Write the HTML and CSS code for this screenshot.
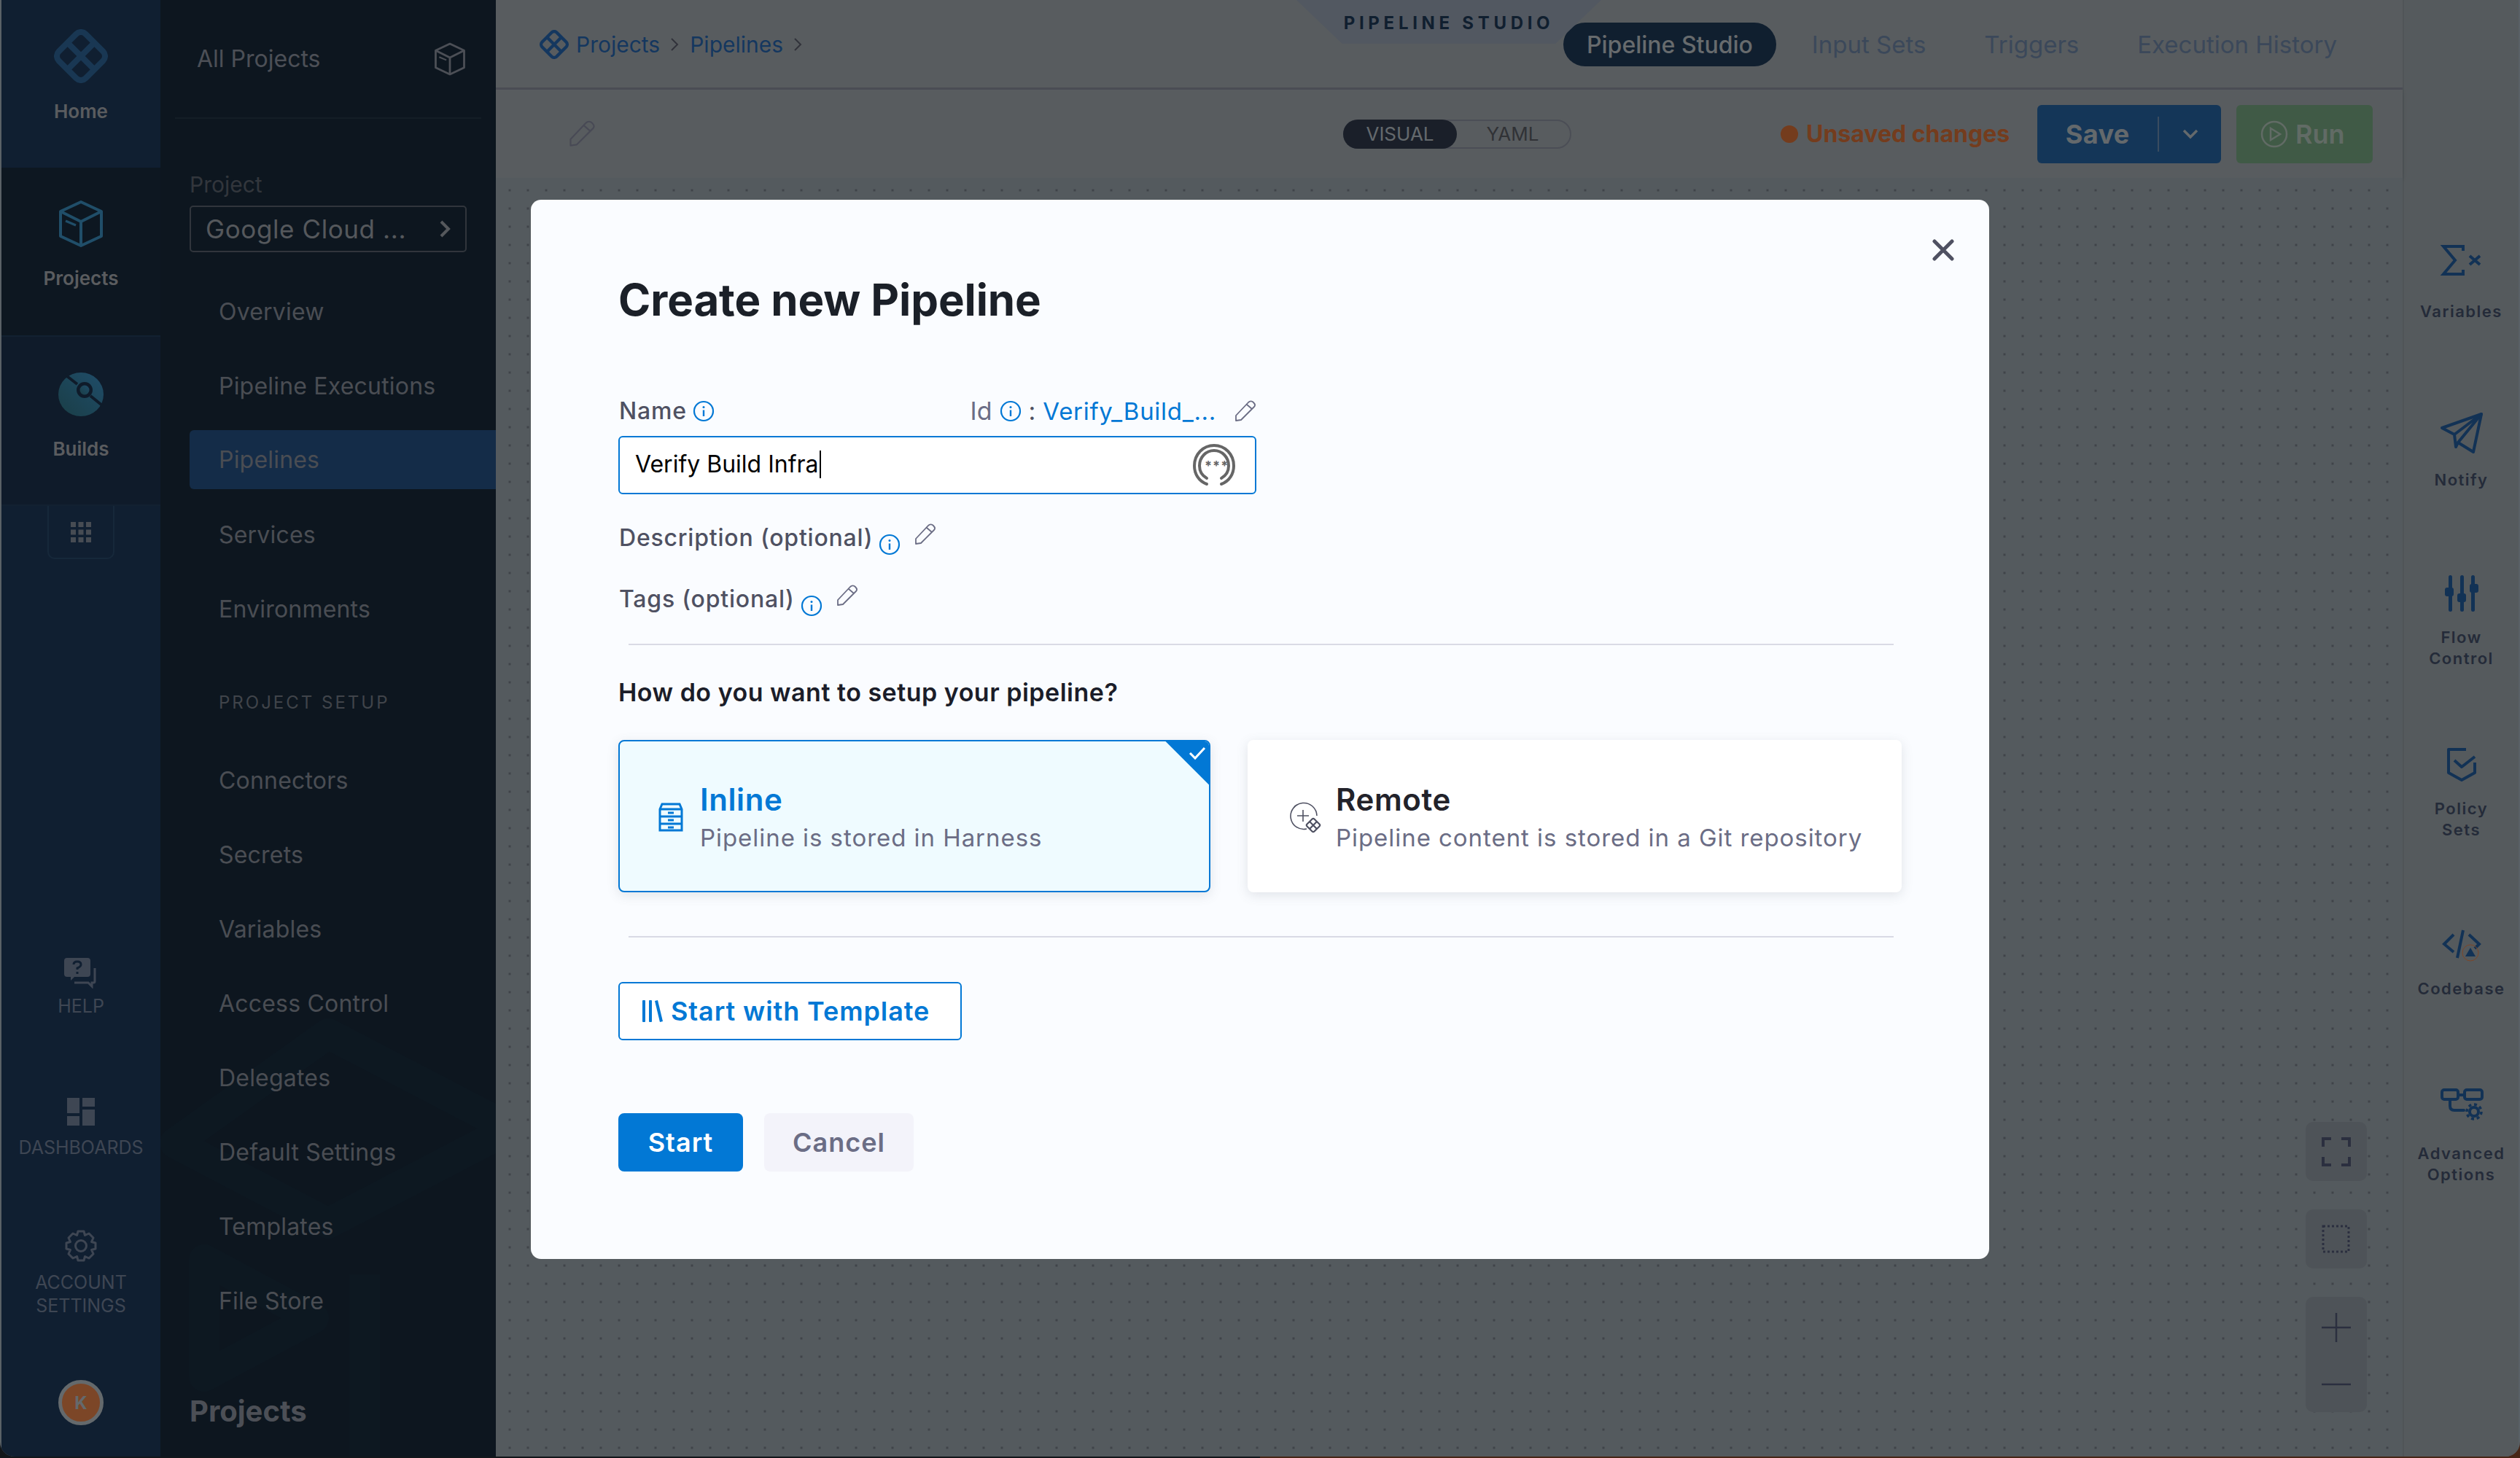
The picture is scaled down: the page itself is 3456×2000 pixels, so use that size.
FILE: index.html
```html
<!DOCTYPE html>
<html lang="en">
<head>
<meta charset="utf-8">
<title>Create new Pipeline</title>
<link rel="stylesheet" href="styles.css">
</head>
<body>
<svg class="defs" width="0" height="0">
  <defs>
    <symbol id="logo" viewBox="0 0 74 74"><g transform="rotate(45 37 37)" fill="none" stroke="currentColor" stroke-width="8" stroke-linejoin="round"><rect x="11" y="11" width="52" height="52" rx="9"/><path d="M37 11V63M11 37H63"/></g></symbol>
    <symbol id="info" viewBox="0 0 30 30"><circle cx="15" cy="15" r="13" fill="none" stroke="#0278d5" stroke-width="2.2"/><path d="M15 13.5V22" stroke="#0278d5" stroke-width="2.4"/><circle cx="15" cy="9.5" r="1.5" fill="#0278d5"/></symbol>
    <symbol id="pencil" viewBox="0 0 30 30"><path d="M2 28V21L19 3C21 1 24 1 26 3S29 7 27 9L9 27Z M17 6L24 12" fill="none" stroke="currentColor" stroke-width="1.8" stroke-linejoin="round"/></symbol>
  </defs>
</svg>
<div class="window">
  <aside class="rail">
    <a class="rail-item rail-home">
      <svg class="ri-logo"><use href="#logo"/></svg>
      <span>Home</span>
    </a>
    <a class="rail-item rail-active">
      <svg class="ri-cube" viewBox="0 0 60 66" fill="none" stroke="currentColor" stroke-width="4" stroke-linejoin="round"><path d="M30 3L58 16V50L30 63L2 50V16Z"/><path d="M2 16L30 30L58 16M30 30V63"/><path d="M9 29L23 35" stroke-width="3"/></svg>
      <span>Projects</span>
    </a>
    <a class="rail-item rail-builds">
      <svg class="ri-builds" viewBox="0 0 62 62"><defs><linearGradient id="bg1" x1="0" y1="1" x2="1" y2="0"><stop offset="0" stop-color="#26707e"/><stop offset="1" stop-color="#338fca"/></linearGradient></defs><ellipse cx="31" cy="31" rx="31" ry="30" fill="url(#bg1)"/><circle cx="36" cy="25" r="11" fill="#0e233e"/><circle cx="36" cy="25" r="6.5" fill="url(#bg1)"/><path d="M8 3L26 17M44 33L60 46" stroke="#0e233e" stroke-width="4"/></svg>
      <span>Builds</span>
    </a>
    <div class="rail-grid">
      <svg width="28" height="28" viewBox="0 0 28 28" fill="#8b8f99"><rect width="7" height="7"/><rect x="10.500" width="7" height="7"/><rect x="21" width="7" height="7"/><rect y="10.500" width="7" height="7"/><rect x="10.500" y="10.500" width="7" height="7"/><rect x="21" y="10.500" width="7" height="7"/><rect y="21" width="7" height="7"/><rect x="10.500" y="21" width="7" height="7"/><rect x="21" y="21" width="7" height="7"/></svg>
    </div>
    <div class="rail-lower">
      <a class="rail-small rs-help">
        <svg width="46" height="42" viewBox="0 0 46 42"><path d="M4 0H32Q36 0 36 4V22Q36 26 32 26H14L9 31V26H4Q0 26 0 22V4Q0 0 4 0Z" fill="currentColor"/><path d="M13 9Q13 5 18 5T23 9Q23 12 18 14V16M18 19V22" fill="none" stroke="#102c4f" stroke-width="3"/><path d="M42 14V32Q42 34 40 34H38V39L33 34H14" fill="none" stroke="currentColor" stroke-width="3"/></svg>
        <span>HELP</span>
      </a>
      <a class="rail-small rs-dash">
        <svg width="38" height="38" viewBox="0 0 38 38" fill="currentColor"><rect width="17" height="21"/><rect x="21" width="17" height="12"/><rect y="25" width="17" height="13"/><rect x="21" y="16" width="17" height="22"/></svg>
        <span>DASHBOARDS</span>
      </a>
      <a class="rail-small rs-acct">
        <svg width="44" height="44" viewBox="0 0 44 44" fill="none" stroke="currentColor" stroke-width="3" stroke-linejoin="round"><circle cx="22" cy="22" r="7.500"/><path d="M18 2H26L27.500 7.500L33 5L39 11L36.500 16.500L42 18V26L36.500 27.500L39 33L33 39L27.500 36.500L26 42H18L16.500 36.500L11 39L5 33L7.500 27.500L2 26V18L7.500 16.500L5 11L11 5L16.500 7.500Z"/></svg>
        <span>ACCOUNT<br>SETTINGS</span>
      </a>
      <div class="avatar">K</div>
    </div>
  </aside>

  <nav class="nav">
    <svg class="nav-mark" width="460" height="620" viewBox="0 0 460 620" fill="none" stroke="#0b1b2b" stroke-width="42" stroke-linejoin="round"><path d="M230 40L480 170L230 300L20 190Z"/><path d="M60 350L210 430L60 510Z"/><path d="M280 370V620"/></svg>
    <div class="nav-head">
      <span>All Projects</span>
      <svg width="46" height="46" viewBox="0 0 60 66" fill="none" stroke="#94959f" stroke-width="4" stroke-linejoin="round"><path d="M30 3L58 16V50L30 63L2 50V16Z"/><path d="M2 16L30 30L58 16M30 30V63"/><path d="M9 29L23 35" stroke-width="3"/></svg>
    </div>
    <div class="nav-project">
      <div class="np-label">Project</div>
      <div class="np-select"><span>Google Cloud ...</span>
        <svg width="16" height="24" viewBox="0 0 16 24" fill="none" stroke="#a9a9ad" stroke-width="4"><path d="M3 2L13 12L3 22"/></svg>
      </div>
    </div>
    <ul class="nav-list">
      <li>Overview</li>
      <li>Pipeline Executions</li>
      <li class="nav-current">Pipelines</li>
      <li>Services</li>
      <li>Environments</li>
    </ul>
    <div class="nav-section">PROJECT SETUP</div>
    <ul class="nav-list">
      <li>Connectors</li>
      <li>Secrets</li>
      <li>Variables</li>
      <li>Access Control</li>
      <li>Delegates</li>
      <li>Default Settings</li>
      <li>Templates</li>
      <li>File Store</li>
    </ul>
    <div class="nav-title">Projects</div>
  </nav>

  <main class="main">
    <div class="work">
      <header class="topbar">
        <div class="crumbs">
          <svg class="crumb-logo"><use href="#logo"/></svg>
          <a>Projects</a>
          <svg class="crumb-sep" width="12" height="20" viewBox="0 0 12 20" fill="none" stroke="currentColor" stroke-width="2"><path d="M2 2L10 10L2 18"/></svg>
          <a>Pipelines</a>
          <svg class="crumb-sep" width="12" height="20" viewBox="0 0 12 20" fill="none" stroke="currentColor" stroke-width="2"><path d="M2 2L10 10L2 18"/></svg>
        </div>
        <div class="studio-tag">PIPELINE STUDIO</div>
        <div class="tabs">
          <a class="tab tab-on">Pipeline Studio</a>
          <a class="tab">Input Sets</a>
          <a class="tab">Triggers</a>
          <a class="tab">Execution History</a>
        </div>
      </header>
      <div class="toolbar">
        <svg class="tb-pencil"><use href="#pencil"/></svg>
        <div class="toggle"><span class="toggle-on">VISUAL</span><span class="toggle-off">YAML</span></div>
        <div class="unsaved"><i></i>Unsaved changes</div>
        <div class="save"><span class="save-label">Save</span><span class="save-caret"><svg width="22" height="14" viewBox="0 0 22 14" fill="none" stroke="currentColor" stroke-width="3.500"><path d="M2 2L11 11L20 2"/></svg></span></div>
        <div class="run"><svg width="38" height="38" viewBox="0 0 38 38" fill="none" stroke="currentColor" stroke-width="2.500"><circle cx="19" cy="19" r="17"/><path d="M14 11L27 19L14 27Z"/></svg><span>Run</span></div>
      </div>
      <div class="canvas">
        <div class="zoom-tools">
          <div class="zt"><svg width="40" height="40" viewBox="0 0 40 40" fill="none" stroke="#4d4f6e" stroke-width="4"><path d="M2 13V2H13M27 2H38V13M2 27V38H13M27 38H38V27"/></svg></div>
          <div class="zt"><svg width="40" height="40" viewBox="0 0 40 40" fill="none" stroke="#4d4f6e" stroke-width="3" stroke-dasharray="3 3"><rect x="2" y="2" width="35" height="35"/></svg></div>
          <div class="zt zt-tall">
            <svg width="40" height="40" viewBox="0 0 40 40" fill="none" stroke="#4d4f6e" stroke-width="2.500"><path d="M20 0V40M0 20H40"/></svg>
            <svg width="40" height="4" viewBox="0 0 40 4" fill="none" stroke="#4d4f6e" stroke-width="2.500"><path d="M0 2H40"/></svg>
          </div>
        </div>
      </div>
    </div>
    <aside class="rrail">
      <a class="rr r1"><svg width="54" height="42" viewBox="0 0 54 42" fill="none" stroke="currentColor" stroke-width="4"><path d="M29 8V2H2L18 21L2 40H29V34"/><path d="M38 15L52 27M52 15L38 27"/></svg><span>Variables</span></a>
      <a class="rr r2"><svg width="58" height="56" viewBox="0 0 58 56" fill="none" stroke="currentColor" stroke-width="4" stroke-linejoin="round"><path d="M2 21L56 2L45 54L24 41L21 47L19 30Z"/><path d="M19 30L56 2L24 41"/></svg><span>Notify</span></a>
      <a class="rr r3"><svg width="46" height="50" viewBox="0 0 46 50" fill="currentColor"><rect x="5" width="5" height="50" rx="2.500"/><rect x="21" width="5" height="50" rx="2.500"/><rect x="36" width="5" height="50" rx="2.500"/><rect y="17" width="12" height="12" rx="3"/><rect x="17" y="25" width="12" height="12" rx="3"/><rect x="34" y="12" width="12" height="12" rx="3"/></svg><span>Flow<br>Control</span></a>
      <a class="rr r4"><svg width="40" height="46" viewBox="0 0 40 46" fill="none" stroke="currentColor" stroke-width="4" stroke-linejoin="round"><path d="M26 2H2V34L20 44L38 34V20"/><path d="M10 17L20 26L38 12"/></svg><span>Policy<br>Sets</span></a>
      <a class="rr r5"><svg width="52" height="44" viewBox="0 0 52 44"><path d="M15 8L2 21L15 32M36 8L50 21L44 27M28 2L20 40" fill="none" stroke="currentColor" stroke-width="4"/><circle cx="38" cy="33" r="11" fill="none" stroke="#ff8039" stroke-width="1"/><path d="M38 26L45 38H31Z" fill="currentColor"/></svg><span>Codebase</span></a>
      <a class="rr r6"><svg width="58" height="46" viewBox="0 0 58 46"><g fill="none" stroke="currentColor" stroke-width="4"><rect x="2" y="2" width="22" height="13" rx="3"/><rect x="33" y="2" width="24" height="13" rx="3"/><path d="M24 9H33M13 15V24Q13 30 19 30H32" stroke-linecap="round"/></g><circle cx="46" cy="32" r="6" fill="none" stroke="currentColor" stroke-width="4"/><circle cx="46" cy="32" r="10" fill="none" stroke="currentColor" stroke-width="3.500" stroke-dasharray="4 3.800"/></svg><span>Advanced<br>Options</span></a>
    </aside>
  </main>

  <div class="overlay">
    <section class="modal">
      <button class="modal-close" aria-label="Close"><svg width="30" height="30" viewBox="0 0 30 30" fill="none" stroke="#4f5162" stroke-width="5" stroke-linecap="round"><path d="M3 3L27 27M27 3L3 27"/></svg></button>
      <h1>Create new Pipeline</h1>
      <div class="field-head">
        <div class="lbl">Name <svg class="ico-info"><use href="#info"/></svg></div>
        <div class="idline">
          <span class="id-k">Id</span><svg class="ico-info"><use href="#info"/></svg><span class="id-c">:</span><a class="id-v">Verify_Build_...</a>
          <svg class="ico-pen"><use href="#pencil"/></svg>
        </div>
      </div>
      <div class="input">
        <span class="input-text">Verify Build Infra</span>
        <svg class="ico-finger" viewBox="0 0 58 58" fill="none" stroke="#666" stroke-width="4" stroke-linecap="round"><path d="M19 55C8 51 2 41 2 30C2 14 14 2 29 2S56 14 56 30C56 41 50 51 39 55"/><path d="M19 47C12 43 9 37 9 30C9 18 18 9 29 9S49 18 49 30C49 37 46 43 39 47"/><text x="16" y="36" class="finger-s">***</text></svg>
      </div>
      <div class="opt opt-desc"><span class="lbl">Description (optional)</span><svg class="ico-info dn"><use href="#info"/></svg><svg class="ico-pen up"><use href="#pencil"/></svg></div>
      <div class="opt opt-tags"><span class="lbl">Tags (optional)</span><svg class="ico-info dn"><use href="#info"/></svg><svg class="ico-pen up"><use href="#pencil"/></svg></div>
      <hr class="rule rule-a">
      <h2>How do you want to setup your pipeline?</h2>
      <div class="cards">
        <div class="card card-on">
          <svg class="card-ico" width="34" height="40" viewBox="0 0 34 40" fill="none" stroke="#0278d5" stroke-width="3"><path d="M5 2H29L32 9V38H2V9Z"/><path d="M2 9H32M2 19H32M2 29H32M13 14H21M13 24H21M13 34H21"/></svg>
          <div class="card-text"><div class="card-t">Inline</div><div class="card-d">Pipeline is stored in Harness</div></div>
          <div class="card-flag"><svg width="24" height="20" viewBox="0 0 24 20" fill="none" stroke="#fff" stroke-width="3"><path d="M2 10L9 17L22 3"/></svg></div>
        </div>
        <div class="card">
          <svg class="card-ico" width="44" height="44" viewBox="0 0 44 44" fill="none" stroke="#4f5162" stroke-width="1.600"><path d="M24 38A18 18 0 1 1 38 20"/><path d="M19 12V28M11 20H27"/><g transform="rotate(45 33 33)" stroke-width="2.200"><rect x="26" y="26" width="14" height="14" rx="2"/><path d="M33 26V40M26 33H40"/></g></svg>
          <div class="card-text"><div class="card-t">Remote</div><div class="card-d">Pipeline content is stored in a Git repository</div></div>
        </div>
      </div>
      <hr class="rule rule-b">
      <button class="btn-tpl"><svg width="28" height="30" viewBox="0 0 28 30" fill="#0278d5"><rect width="4" height="30" rx="1"/><rect x="9" width="4" height="30" rx="1"/><path d="M17 1L21 0L28 29L24 30Z"/></svg>Start with Template</button>
      <div class="actions">
        <button class="btn-start">Start</button>
        <button class="btn-cancel">Cancel</button>
      </div>
    </section>
  </div>
</div>
</body>
</html>
```

FILE: styles.css
```css
* { box-sizing: border-box; }
html, body { margin: 0; height: 100%; }
body {
  width: 3456px;
  height: 2000px;
  overflow: hidden;
  background: linear-gradient(to right, #14181c 0 50%, #8a3a14 50% 100%);
  font-family: Inter, "Noto Sans", sans-serif;
  color: #1b1d29;
}
a { text-decoration: none; color: inherit; }
ul { list-style: none; margin: 0; padding: 0; }
button { font-family: inherit; cursor: pointer; }
.defs { position: absolute; }

.window {
  position: relative;
  display: flex;
  width: 3456px;
  height: 1998px;
  padding: 0 2px;
  background: #b4bcc4;
  border-radius: 0 0 20px 20px;
  overflow: hidden;
}

/* ---------- left rail ---------- */
.rail {
  width: 218px;
  flex: none;
  display: flex;
  flex-direction: column;
  background: #102c4f;
}
.rail-item {
  height: 232px;
  flex: none;
  display: flex;
  flex-direction: column;
  align-items: center;
  font-size: 26px;
  font-weight: 600;
  line-height: 32px;
  color: #b4b1b3;
}
.rail-home { height: 230px; padding-top: 40px; }
.rail-home span { margin-top: 23px; }
.ri-logo { width: 74px; height: 74px; color: #24609a; }
.rail-active { background: #091a2a; padding-top: 44px; border-bottom: 2px solid #14304e; }
.rail-active span { margin-top: 26px; }
.ri-cube { width: 60px; height: 66px; color: #3392c9; }
.rail-builds { background: #0e233e; padding-top: 48px; border-bottom: 2px solid #14304e; }
.rail-builds span { margin-top: 28px; }
.ri-builds { width: 62px; height: 62px; }
.rail-grid {
  width: 92px;
  height: 73px;
  margin: 0 auto;
  display: flex;
  align-items: center;
  justify-content: center;
  border: 2px solid #1e3e62;
  border-top: 0;
  border-radius: 0 0 10px 10px;
}
.rail-lower {
  margin-top: auto;
  display: flex;
  flex-direction: column;
  align-items: center;
  padding-bottom: 43px;
}
.rail-small {
  display: flex;
  flex-direction: column;
  align-items: center;
  font-size: 25px;
  line-height: 32px;
  color: #77809a;
  text-align: center;
}
.rail-small span { display: block; margin-top: 8px; }
.rs-dash { margin-top: 110px; }
.rs-dash span { margin-top: 14px; }
.rs-acct { margin-top: 97px; }
.rs-acct span { margin-top: 12px; }
.avatar {
  width: 62px;
  height: 62px;
  margin-top: 86px;
  display: flex;
  align-items: center;
  justify-content: center;
  border: 5px solid #cbced0;
  border-radius: 50%;
  background: #ff8039;
  color: #cbced0;
  font-size: 24px;
  font-weight: 700;
}

/* ---------- nav ---------- */
.nav {
  position: relative;
  width: 460px;
  flex: none;
  background: #091827;
  overflow: hidden;
}
.nav-mark { position: absolute; left: 0; bottom: 0; }
.nav > div, .nav > ul { position: relative; }
.nav-head {
  height: 163px;
  margin: 0 20px;
  padding: 0 20px 0 30px;
  display: flex;
  align-items: center;
  justify-content: space-between;
  border-bottom: 2px solid #1a2937;
  font-size: 32px;
  color: #94959f;
}
.nav-project { padding: 72px 40px 0; }
.np-label { font-size: 30px; line-height: 36px; color: #5b5d66; }
.np-select {
  height: 64px;
  margin-top: 11px;
  padding: 0 20px 0 20px;
  display: flex;
  align-items: center;
  justify-content: space-between;
  border: 2px solid #5a5c66;
  border-radius: 5px;
  font-size: 35px;
  letter-spacing: .6px;
  color: #a9a9ad;
}
.nav-list { padding-left: 40px; }
.nav-project + .nav-list { margin-top: 30px; }
.nav-list li {
  height: 102px;
  padding-left: 40px;
  display: flex;
  align-items: center;
  font-size: 32px;
  letter-spacing: .2px;
  color: #90919a;
}
.nav-list li.nav-current {
  height: 81px;
  margin: 10px 0 11px;
  background: #194780;
  border-radius: 6px 0 0 6px;
}
.nav-section {
  margin: 53px 0 0 80px;
  height: 50px;
  line-height: 50px;
  font-size: 24px;
  letter-spacing: 3px;
  color: #7a7c85;
}
.nav-section + .nav-list { margin-top: 30px; }
.nav-title {
  margin: 77px 0 0 40px;
  font-size: 40px;
  font-weight: 700;
  line-height: 48px;
  color: #94959f;
}

/* ---------- main ---------- */
.main { flex: 1; min-width: 0; display: flex; }
.work { flex: 1; min-width: 0; display: flex; flex-direction: column; }
.topbar {
  position: relative;
  height: 123px;
  flex: none;
  display: flex;
  align-items: center;
  padding: 2px 59px 0 60px;
  background: #b0b2b3;
  border-bottom: 3px solid #93929f;
}
.crumbs { display: flex; align-items: center; font-size: 30px; color: #195fb3; }
.crumb-logo { width: 40px; height: 40px; margin-right: 10px; }
.crumb-sep { margin: 0 15px 0 14px; color: #595664; }
.studio-tag {
  position: absolute;
  left: 1098px;
  top: 0;
  width: 418px;
  height: 60px;
  display: flex;
  align-items: flex-start;
  justify-content: center;
  padding-top: 17px;
  background: #a2a8b8;
  clip-path: polygon(0 0, 100% 0, 85% 100%, 15% 100%);
  font-size: 24px;
  font-weight: 700;
  line-height: 30px;
  letter-spacing: 5.700px;
  color: #102a4b;
}
.tabs { margin-left: auto; display: flex; gap: 18px; }
.tab {
  height: 60px;
  padding: 0 31px;
  display: flex;
  align-items: center;
  border-radius: 30px;
  font-size: 33px;
  color: #6f86a8;
}
.tab-on { padding: 0 32px; background: #102a4b; color: #d0d2d2; font-weight: 500; font-size: 32px; }

.toolbar {
  height: 121px;
  flex: none;
  display: flex;
  align-items: center;
  padding-left: 100px;
  background: #b0b2b3;
  box-shadow: 0 2px 6px rgba(0, 0, 0, .12);
  position: relative;
}
.tb-pencil { width: 37px; height: 37px; color: #8d8a9e; }
.toggle {
  width: 313px;
  height: 40px;
  margin-left: 1025px;
  display: flex;
  align-items: center;
  border: 2px solid #93929f;
  border-radius: 20px;
  font-size: 26px;
}
.toggle-on {
  width: 156px;
  height: 40px;
  margin: 0 0 0 -2px;
  display: flex;
  align-items: center;
  justify-content: center;
  background: #262c3d;
  border-radius: 20px;
  color: #cbcfd3;
}
.toggle-off { flex: 1; text-align: center; padding-right: 2px; color: #575459; }
.unsaved {
  margin-left: 287px;
  display: flex;
  align-items: center;
  font-size: 32px;
  font-weight: 700;
  color: #ee6a22;
}
.unsaved i { width: 24px; height: 24px; margin-right: 11px; border-radius: 50%; background: #ee6a22; }
.save {
  width: 252px;
  height: 80px;
  margin-left: 38px;
  display: flex;
  align-items: center;
  background: #195da4;
  border-radius: 6px;
  color: #cbced0;
}
.save-label {
  width: 167px;
  height: 48px;
  display: flex;
  align-items: center;
  justify-content: center;
  border-right: 2px solid #6e8fb5;
  font-size: 36px;
  font-weight: 700;
  letter-spacing: .4px;
}
.save-caret { flex: 1; display: flex; justify-content: center; }
.run {
  width: 187px;
  height: 80px;
  margin-left: 21px;
  padding-right: 6px;
  display: flex;
  align-items: center;
  justify-content: center;
  gap: 10px;
  background: #7bad7c;
  border-radius: 6px;
  color: #c4d2c2;
  font-size: 36px;
  font-weight: 600;
}
.canvas {
  position: relative;
  flex: 1;
  background-color: #a7adb1;
  background-image: radial-gradient(circle, #7a7c84 1.500px, transparent 2px);
  background-size: 25px 25px;
  background-position: 6.500px 4.500px;
}
.zoom-tools {
  position: absolute;
  right: 49px;
  bottom: 61px;
  display: flex;
  flex-direction: column;
  gap: 39px;
}
.zt {
  width: 84px;
  height: 81px;
  display: flex;
  align-items: center;
  justify-content: center;
  background: #9a9da4;
  border-radius: 10px;
}
.zt-tall { height: 158px; flex-direction: column; gap: 56px; padding-bottom: 14px; }

/* ---------- right rail ---------- */
.rrail {
  width: 159px;
  flex: none;
  display: flex;
  flex-direction: column;
  background: #a9adaf;
  border-left: 2px solid #9da1a3;
  padding-top: 327px;
}
.rr {
  display: flex;
  flex-direction: column;
  align-items: center;
  color: #16549e;
}
.rr svg { height: 60px; overflow: visible; }
.rr span {
  margin-top: 20px;
  font-size: 22px;
  font-weight: 600;
  line-height: 29px;
  letter-spacing: 1.500px;
  text-align: center;
  color: #3d4560;
}
.r1 { height: 237px; }
.r1 span { margin-top: 26px; }
.r2 { height: 220px; }
.r3 { height: 235px; }
.r3 span, .r4 span, .r5 span { margin-top: 16px; }
.r4 { height: 247px; }
.r5 { height: 220px; }
.r6 span { margin-top: 22px; }

/* ---------- overlay + modal ---------- */
.overlay {
  position: fixed;
  inset: 0;
  display: flex;
  align-items: center;
  justify-content: center;
  background: rgba(16, 22, 26, .55);
}
.modal {
  position: relative;
  width: 2000px;
  height: 1453px;
  padding: 107px 120px 0;
  background: #fafcff;
  border-radius: 14px;
}
.modal-close {
  position: absolute;
  right: 48px;
  top: 54px;
  padding: 0;
  display: flex;
  border: 0;
  background: none;
}
h1 {
  margin: 0;
  font-size: 60px;
  font-weight: 700;
  line-height: 60px;
  letter-spacing: -.1px;
  color: #1b2028;
}
.field-head {
  height: 40px;
  margin-top: 103px;
  padding-left: 1px;
  display: flex;
  align-items: center;
  justify-content: space-between;
  width: 875px;
}
.lbl { display: flex; align-items: center; gap: 8px; font-size: 32px; font-weight: 500; letter-spacing: .8px; color: #4f5162; }
.ico-info { width: 30px; height: 30px; flex: none; }
.ico-pen { width: 30px; height: 30px; color: #6b6d85; flex: none; }
.idline { display: flex; align-items: center; font-size: 34px; }
.id-k { color: #6b6d85; margin-right: 10px; }
.id-c { margin: 0 10px 0 10px; color: #4f5162; }
.id-v { color: #0278d5; font-size: 33px; letter-spacing: .7px; margin-right: 25px; }
.input {
  width: 875px;
  height: 80px;
  margin-top: 14px;
  padding: 0 27px 0 21px;
  display: flex;
  align-items: center;
  justify-content: space-between;
  background: #fff;
  border: 2.500px solid #0278d5;
  border-radius: 6px;
}
.input-text { position: relative; top: -1px; font-size: 32px; color: #000; border-right: 2px solid #000; padding-right: 1px; line-height: 38px; }
.ico-finger { width: 58px; height: 58px; }
.finger-s { font: 700 18px Inter, sans-serif; fill: #666; stroke: none; letter-spacing: 1px; }
.opt { height: 40px; padding-left: 1px; display: flex; align-items: center; }
.opt-desc { margin-top: 40px; }
.opt-tags { margin-top: 44px; }
.opt .dn { margin: 18px 0 0 8px; }
.opt .up { margin: -10px 0 0 19px; }
.rule { height: 2px; margin: 0; border: 0; background: #d9dae5; }
.rule-a { margin: 41px 11px 0 14px; }
.rule-b { margin: 60px 11px 0 14px; }
h2 {
  margin: 45px 0 0;
  font-size: 34px;
  font-weight: 600;
  line-height: 40px;
  letter-spacing: .5px;
  color: #1b1d29;
}
.cards { display: flex; gap: 51px; margin-top: 45px; }
.card {
  position: relative;
  width: 897px;
  flex: none;
  height: 209px;
  display: flex;
  align-items: center;
  padding-left: 57px;
  background: #fff;
  border-radius: 8px;
  box-shadow: 0 4px 16px rgba(96, 97, 112, .16);
  overflow: hidden;
}
.card-ico { flex: none; margin: 4px 20px 0 0; }
.card-on { width: 812px; padding-left: 53px; background: #effbff; border: 2px solid #0278d5; }
.card-on .card-ico { margin-right: 23px; }
.card-text { padding-top: 6px; }
.card-t { font-size: 42px; font-weight: 600; line-height: 48px; letter-spacing: .6px; color: #22222a; }
.card-on .card-t { color: #0278d5; }
.card-d { margin-top: 5px; font-size: 33px; line-height: 46px; letter-spacing: .95px; color: #6b6d85; }
.card-flag {
  position: absolute;
  right: -2px;
  top: -2px;
  width: 64px;
  height: 64px;
  padding: 8px 6px 0 0;
  display: flex;
  align-items: flex-start;
  justify-content: flex-end;
  background: #0278d5;
  clip-path: polygon(0 0, 100% 0, 100% 100%);
}
.btn-tpl {
  width: 471px;
  height: 80px;
  margin-top: 61px;
  padding: 0 0 0 31px;
  display: flex;
  align-items: center;
  gap: 11px;
  background: #fff;
  border: 2px solid #0278d5;
  border-radius: 6px;
  color: #0278d5;
  font-size: 36px;
  font-weight: 600;
  letter-spacing: .9px;
}
.actions { display: flex; gap: 29px; margin-top: 100px; }
.btn-start, .btn-cancel {
  height: 80px;
  border: 0;
  border-radius: 8px;
  font-size: 36px;
  font-weight: 600;
  letter-spacing: 1px;
}
.btn-start { width: 171px; background: #0278d5; color: #fff; }
.btn-cancel { width: 205px; background: #f3f3fa; color: #6b6d85; }
```
